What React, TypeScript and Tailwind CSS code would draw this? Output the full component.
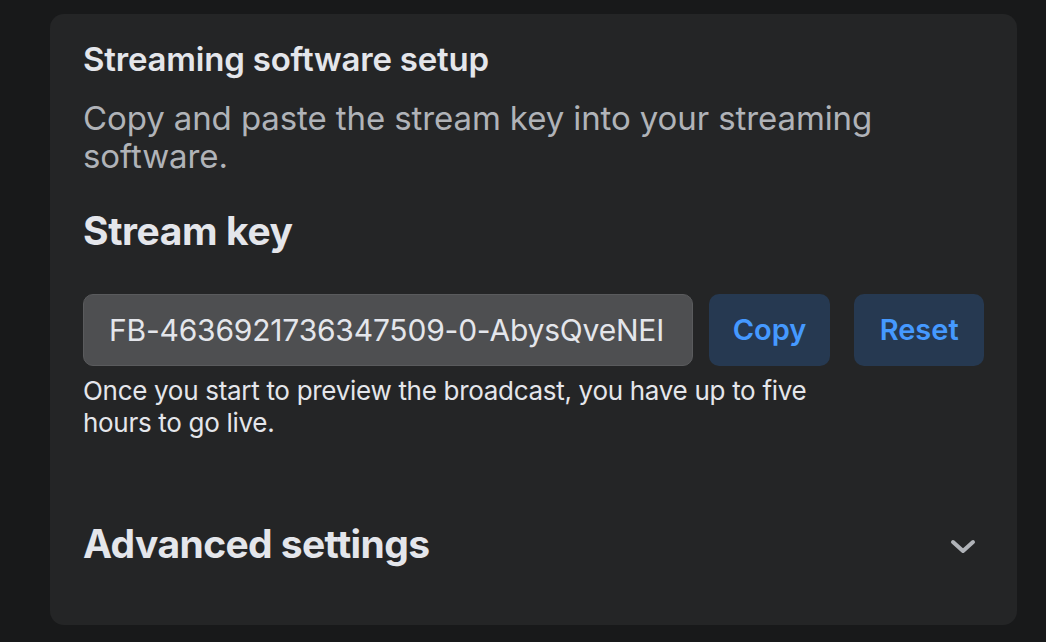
export default function App() {
  return (
    <div className="min-h-screen w-full bg-[#18191a] pt-[14px] pl-[50px] pr-[29px] font-['Inter',sans-serif] text-[#e4e6eb]">
      <div className="rounded-[14px] bg-[#242526] px-[33px] pt-[25px] pb-[58px]">
        <h2 className="text-[33px] font-semibold leading-[40px] tracking-[-0.2px]">Streaming software setup</h2>
        <p className="mt-[20px] max-w-[810px] text-[33px] leading-[38px] text-[#b0b3b8] tracking-[-0.1px]">
          Copy and paste the stream key into your streaming software.
        </p>

        <h3 className="mt-[33px] text-[39px] font-bold leading-[46px] tracking-[-0.4px]">Stream key</h3>

        <div className="mt-[40px] flex items-center">
          <div className="flex h-[72px] w-[611px] items-center overflow-hidden rounded-[10px] border border-[#5a5b5d] bg-[#4e4f51] pl-[25px] pr-[20px]">
            <span className="whitespace-nowrap text-[30px] text-[#e4e6eb] tracking-[-0.2px]">FB-4636921736347509-0-AbysQveNEI</span>
          </div>
          <button className="ml-[16px] h-[72px] w-[122px] rounded-[10px] bg-[#263951] text-[29px] font-semibold text-[#4599ff]">Copy</button>
          <button className="ml-[24px] h-[72px] w-[130px] rounded-[10px] bg-[#263951] text-[29px] font-semibold text-[#4599ff]">Reset</button>
        </div>

        <p className="mt-[9px] max-w-[760px] text-[26px] leading-[32px] text-[#e4e6eb] tracking-[-0.3px]">
          Once you start to preview the broadcast, you have up to five hours to go live.
        </p>

        <div className="mt-[82px] flex items-center justify-between pr-[8px]">
          <span className="text-[39px] font-bold leading-[46px] tracking-[-0.6px]">Advanced settings</span>
          <svg className="mt-[6px]" width="26" height="16" viewBox="0 0 26 16" fill="none">
            <path d="M3 3 L13 12 L23 3" stroke="#b0b3b8" strokeWidth="4" strokeLinecap="round" strokeLinejoin="round" />
          </svg>
        </div>
      </div>
    </div>
  );
}
